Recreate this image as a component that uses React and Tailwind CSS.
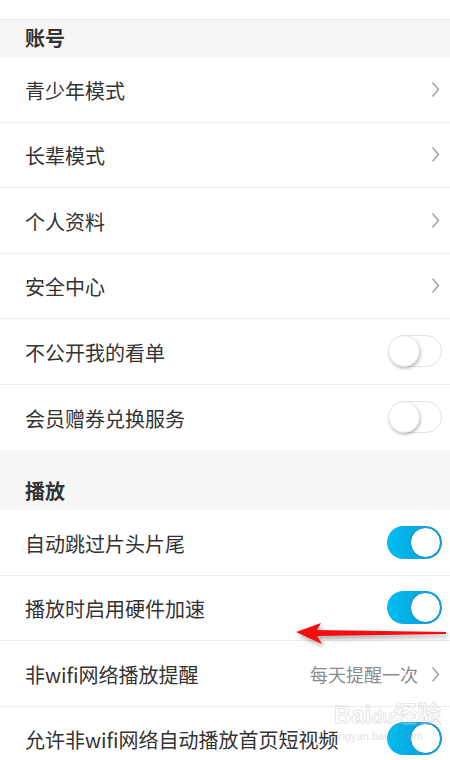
import React from "react";

const font = { fontFamily: '"Noto Sans CJK SC", "Noto Sans", sans-serif' };

function Chevron() {
  return (
    <svg width="9" height="17" viewBox="0 0 9 17" className="shrink-0">
      <path d="M1.5 1.5 L7.5 8.5 L1.5 15.5" fill="none" stroke="#9a9a9a" strokeWidth="1.3" />
    </svg>
  );
}

function Toggle({ on }) {
  if (on) {
    return (
      <div className="relative h-[33px] w-[55px] shrink-0 rounded-full bg-gradient-to-r from-[#00bdf0] to-[#0a98d6]">
        <div className="absolute right-[1px] top-[1px] h-[31px] w-[31px] rounded-full border border-[#0d8fc8] bg-white" />
      </div>
    );
  }
  return (
    <div className="relative h-[32px] w-[54px] shrink-0 rounded-full border border-[#e4e4e4] bg-white">
      <div className="absolute -left-[1px] -top-[1px] h-[32px] w-[32px] rounded-full border border-[#e6e6e6] bg-white shadow-[1px_2px_3px_rgba(0,0,0,0.22)]" />
    </div>
  );
}

function Row({ label, right, last }) {
  return (
    <div
      className={`flex h-[65.5px] items-center justify-between bg-white pl-[25px] pr-[8px] ${
        last ? "" : "border-b border-[#ececec]"
      }`}
    >
      <span className="pt-[3px] text-[20px] leading-[28px] text-[#333]">{label}</span>
      {right}
    </div>
  );
}

function Header({ title, h }) {
  return (
    <div className={`flex items-end bg-[#f6f6f6] pb-[5px] pl-[25px] ${h}`}>
      <span className="text-[20px] font-bold leading-[28px] text-[#333]">{title}</span>
    </div>
  );
}

export default function App() {
  const account = [
    { label: "青少年模式", type: "link" },
    { label: "长辈模式", type: "link" },
    { label: "个人资料", type: "link" },
    { label: "安全中心", type: "link" },
    { label: "不公开我的看单", type: "off" },
    { label: "会员赠券兑换服务", type: "off" },
  ];

  const renderRight = (type) => {
    if (type === "link") return <div className="pr-[2px]"><Chevron /></div>;
    if (type === "off") return <Toggle on={false} />;
    return <Toggle on />;
  };

  return (
    <div className="relative h-[760px] w-[450px] overflow-hidden bg-white" style={font}>
      <div className="h-[20px] border-b border-[#e8e8e8] bg-white" />
      <Header title="账号" h="h-[37px]" />
      {account.map((item, i) => (
        <Row
          key={item.label}
          label={item.label}
          right={renderRight(item.type)}
          last={i === account.length - 1}
        />
      ))}
      <Header title="播放" h="h-[60px]" />
      <Row label="自动跳过片头片尾" right={<Toggle on />} />
      <Row label="播放时启用硬件加速" right={<Toggle on />} />
      <Row
        label="非wifi网络播放提醒"
        right={
          <div className="flex items-center gap-[13px] pr-[2px] pt-[3px]">
            <span className="text-[18px] text-[#8a8a8a]">每天提醒一次</span>
            <Chevron />
          </div>
        }
      />
      <Row label="允许非wifi网络自动播放首页短视频" right={<Toggle on />} />

      {/* red annotation arrow */}
      <svg
        className="absolute left-[292px] top-[618px]"
        width="158"
        height="30"
        viewBox="0 0 158 30"
      >
        <defs>
          <filter id="sh" x="-10%" y="-50%" width="130%" height="200%">
            <feDropShadow dx="2" dy="3" stdDeviation="2" floodColor="#000" floodOpacity="0.35" />
          </filter>
        </defs>
        <path
          d="M4 14 L29 5 L25 12 L154 14 L154 16 L25 18 L30 26 Z"
          fill="#f70f0f"
          filter="url(#sh)"
        />
      </svg>

      {/* watermark */}
      <div className="pointer-events-none absolute left-[334px] top-[702px] flex flex-col whitespace-nowrap opacity-30">
        <span
          className="text-[24px] font-bold leading-[26px] text-white [-webkit-text-stroke:1px_#aaa]"
          style={{ fontFamily: '"Liberation Sans", "Noto Sans CJK SC", sans-serif' }}
        >
          Bai<span className="text-[18px]">du</span>经验
        </span>
        <span className="text-[11px] leading-[12px] text-[#999]" style={{ fontFamily: '"Liberation Sans", sans-serif' }}>
          jingyan.baidu.com
        </span>
      </div>
    </div>
  );
}
